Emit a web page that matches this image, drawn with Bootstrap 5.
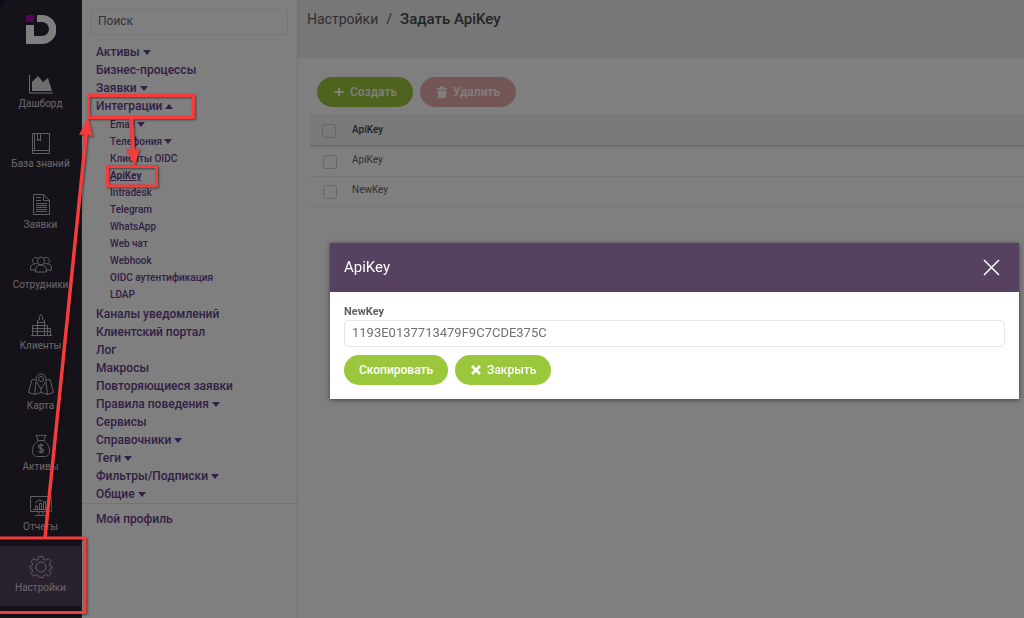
<!DOCTYPE html>
<html lang="ru">
<head>
<meta charset="utf-8">
<meta name="viewport" content="width=device-width, initial-scale=1">
<title>Настройки / Задать ApiKey</title>
<link href="https://cdn.jsdelivr.net/npm/bootstrap@5.3.0/dist/css/bootstrap.min.css" rel="stylesheet">
<style>
body{font-family:Roboto,"Open Sans",sans-serif;font-size:12px;line-height:18px;color:#606060;background:#fff}
.app{min-height:100vh}
.rail-wrap{background:#10182c}
.rail{width:82px;height:100%;padding:14px 0 12px;background:#2c2434;border-top-left-radius:10px;border-right:1px solid #3c3444}
.brand{height:48px}
.brand svg{width:30px;height:30px}
.brand path{fill:#fff}
.brand .dot{fill:#a808b4}
.rail-item{color:#d4d0d8;font-size:10px;line-height:14px;text-decoration:none;padding-top:9px}
.rail-item svg{width:26px;height:24px;fill:none;stroke:#c0bcc4;stroke-width:1;margin-bottom:2px}
.rail-item.active{background:#54425f}
.side{width:216px;padding-top:9px;border-right:1px solid #e4e4e4}
.side .form-control{height:26px;padding:0 7px 2px;font-size:12px;color:#666;background:transparent;border-color:#ececec;border-radius:3px}
.side .form-control::placeholder{color:#666;opacity:1}
.side a{color:#67408c;font-weight:500;text-decoration:none;display:block}
.search-box{padding:0 9px 8px 8px}
.tree{padding-left:14px}
.tree ul{padding:1px 0 2px 14px;font-size:10px;line-height:17px}
.tree .current{text-decoration:underline;font-weight:700}
.caret{display:inline-block;border:4px solid transparent;border-top:5px solid currentColor;border-bottom:0;vertical-align:1px}
.caret.up{border-top:0;border-bottom:5px solid currentColor}
.profile{border-top:1px solid #e8e8e8;padding:6px 14px}
.page-top{height:58px;background:#eee;padding:9px;font-size:14px;line-height:20px}
.page-top a{color:#606060;text-decoration:none}
.page-top strong{font-size:15px;font-weight:500;color:#484848}
.work{padding:19px 0 0 12px}
.toolbar,.actions{gap:7px}
.toolbar{padding-left:7px}
.pill{height:30px;border-radius:15px;padding:0 14px;border:0;color:#fff;font-size:12px;font-weight:500;line-height:28px;background:#9bc73c}
.pill svg{width:12px;height:12px;margin-right:2px;vertical-align:-2px}
.pill-wide{min-width:96px}
.actions .pill{padding:0 15px}
.pill-del{background:#ebacac;color:#fff}
.keys{font-size:10px;line-height:16px;margin:7px 0 0;--bs-table-color:#606060;--bs-table-bg:transparent}
.keys th,.keys td{padding:5px 0 7px;border-bottom:1px solid #ececec;font-weight:400;vertical-align:top}
.keys th{padding:8px 0 7px;background:#f4f4f4;border-bottom:2px solid #dcdcdc;font-weight:500;color:#444}
.keys th:first-child,.keys td:first-child{width:42px;padding-left:12px}
.keys .form-check-input{width:14px;height:14px;margin:2px 0 0;border-color:#ccc;border-radius:3px;background:transparent;display:block}
.keys td .form-check-input{margin:3px 0 0 1px}
.shade{position:fixed;inset:0;background:rgba(0,0,0,.5)}
.dialog{position:absolute;left:330px;right:5px;top:243px;background:#fff;box-shadow:0 1px 5px rgba(0,0,0,.5)}
.dialog-head{height:49px;background:#564260;color:#fff;padding:0 14px}
.dialog-head h1{font-size:15px;line-height:20px;font-weight:400;margin:0;padding-bottom:2px}
.dialog-head button{border:0;background:none;padding:0 5px 0 0;line-height:0}
.dialog-body{padding:12px 14px 14px}
.dialog-body label{font-size:11px;line-height:16px;font-weight:700;display:block}
.dialog-body .form-control{height:27px;padding:0 7px 2px;font-size:13px;line-height:20px;color:#707070;border-color:#e8e8e8;border-radius:4px;margin-bottom:8px}
.marks{position:absolute;left:0;top:0;pointer-events:none;filter:drop-shadow(1px 1px 1px rgba(0,0,0,.5))}
</style>
</head>
<body class="overflow-hidden">
<div class="app d-flex align-items-stretch">
  <div class="rail-wrap flex-shrink-0">
  <nav class="rail d-flex flex-column" aria-label="Разделы">
    <a class="brand d-flex justify-content-center align-items-start" href="#" aria-label="Главная"><svg viewBox="0 0 30 30"><path class="dot" d="M0 1h8v7H0z"/><path d="M11 1h5a14 14 0 0 1 0 29H0V11h8v11h8a7 7 0 0 0 0-14h-5z"/></svg></a>
    <a class="rail-item flex-fill d-flex flex-column align-items-center" href="#"><svg viewBox="0 0 26 24"><path d="M1.500 4v18H25" stroke="#ddd"/><path d="M4 20v-9l6-6 5 6 5-4 4 13z" fill="#ddd" stroke="none"/></svg>Дашборд</a>
    <a class="rail-item flex-fill d-flex flex-column align-items-center" href="#"><svg viewBox="0 0 26 24"><path d="M4.500 2.500h17v20h-17zM4.500 19.500h17M6.500 3v16M9.500 3v7l1.500-2 1.500 2V3"/></svg>База знаний</a>
    <a class="rail-item flex-fill d-flex flex-column align-items-center" href="#"><svg viewBox="0 0 26 24"><path d="M5.500 2.500h10l6 6v14h-16zM15.500 2.500v6h6M8 5.500h5M8 8.500h5M8 11.500h11M8 13.500h11M8 15.500h11M8 17.500h11M8 19.500h11"/></svg>Заявки</a>
    <a class="rail-item flex-fill d-flex flex-column align-items-center" href="#"><svg viewBox="0 0 26 24"><path d="M7.500 20c0-6 2-7 5.500-7s5.500 1 5.500 7zM8 18H2.500c0-5 1-6 4.500-6M18 18h5.500c0-5-1-6-4.500-6"/><ellipse cx="13" cy="9" rx="3.500" ry="4"/><path d="M9.500 11C6 13 4 10 4.500 8s3-4 5.500-1.500M16.500 11c3.500 2 5.500-1 5-3s-3-4-5.500-1.500"/></svg>Сотрудники</a>
    <a class="rail-item flex-fill d-flex flex-column align-items-center" href="#"><svg viewBox="0 0 26 24"><path d="M3 22.500h21M4.500 22V12.500h5V22M9.500 22V7.500l2-1v-3l1.500-2 1.500 2v3l2 1V22M16.500 12.500h3V22M19.500 15.500h3V22M10 9.500h6M10 12.500h6M10 15.500h6M10 18.500h6M5 15.500h4M5 18.500h4M17 15.500h2M17 18.500h5"/></svg>Клиенты</a>
    <a class="rail-item flex-fill d-flex flex-column align-items-center" href="#"><svg viewBox="0 0 26 24"><path d="M13 16c-3-5-5-7-5-10a5 5 0 0 1 10 0c0 3-2 5-5 10zM8 7 4 6.500.500 19.500l6 2 6.500-2 6.500 2 6-2L22 6.500 18 7M8 9 6.500 21.500M18 9l1.500 12.500M13 16v3.500"/><circle cx="13" cy="6" r="2.500"/></svg>Карта</a>
    <a class="rail-item flex-fill d-flex flex-column align-items-center" href="#"><svg viewBox="0 0 26 24"><path d="m10 6-2-5 3 1 2-1 2 1 3-1-2 5M9.500 6.500h7M10 7C6 10 4.500 13 4.500 17c0 4 2 5.500 5 5.500h7c3 0 5-1.500 5-5.500 0-4-1.500-7-5.500-10"/><path d="M15.500 12c-1-1.500-5-1.500-5 .8 0 2.400 5 1.200 5 3.700 0 2.300-4 2.300-5 .5M13 9.500v10" stroke-width="1.300"/></svg>Активы</a>
    <a class="rail-item flex-fill d-flex flex-column align-items-center" href="#"><svg viewBox="0 0 26 24"><path d="M2.500 2.500h21v15h-21zM11 17.500v3M15 17.500v3M7 21.500h12M5 15.500h16"/><path d="M7.500 15v-3h2v3M11.500 15V9.500h2V15M15.500 15V7.500h2V15M19.500 15v-4M7 9l4-3 3 1" stroke="#a8c4dc"/></svg>Отчеты</a>
    <a class="rail-item active flex-fill d-flex flex-column align-items-center" href="#"><svg viewBox="0 0 26 24"><circle cx="13" cy="12" r="5"/><path d="M11 1.500h4l.7 3 2 .8 2.600-1.600L23 6.400 21.400 9l.8 2 1.800.4v2.200l-1.800.4-.8 2 1.600 2.600-2.700 2.500-2.600-1.600-2 .8-.7 2.200h-4l-.7-2.200-2-.8-2.600 1.600L3 18.600 4.600 16l-.8-2-1.800-.4v-2.200l1.800-.4.8-2L3 6.400l2.700-2.700 2.600 1.600 2-.8z"/></svg>Настройки</a>
  </nav>
  </div>

  <aside class="side flex-shrink-0">
    <div class="search-box"><input class="form-control" type="text" placeholder="Поиск" aria-label="Поиск"></div>
    <ul class="tree list-unstyled mb-0">
      <li><a href="#">Активы <i class="caret"></i></a></li>
      <li><a href="#">Бизнес-процессы</a></li>
      <li><a href="#">Заявки <i class="caret"></i></a></li>
      <li><a href="#">Интеграции <i class="caret up"></i></a>
        <ul class="list-unstyled">
          <li><a href="#">Email <i class="caret"></i></a></li>
          <li><a href="#">Телефония <i class="caret"></i></a></li>
          <li><a href="#">Клиенты OIDC</a></li>
          <li><a href="#" class="current">ApiKey</a></li>
          <li><a href="#">Intradesk</a></li>
          <li><a href="#">Telegram</a></li>
          <li><a href="#">WhatsApp</a></li>
          <li><a href="#">Web чат</a></li>
          <li><a href="#">Webhook</a></li>
          <li><a href="#">OIDC аутентификация</a></li>
          <li><a href="#">LDAP</a></li>
        </ul>
      </li>
      <li><a href="#">Каналы уведомлений</a></li>
      <li><a href="#">Клиентский портал</a></li>
      <li><a href="#">Лог</a></li>
      <li><a href="#">Макросы</a></li>
      <li><a href="#">Повторяющиеся заявки</a></li>
      <li><a href="#">Правила поведения <i class="caret"></i></a></li>
      <li><a href="#">Сервисы</a></li>
      <li><a href="#">Справочники <i class="caret"></i></a></li>
      <li><a href="#">Теги <i class="caret"></i></a></li>
      <li><a href="#">Фильтры/Подписки <i class="caret"></i></a></li>
      <li><a href="#">Общие <i class="caret"></i></a></li>
    </ul>
    <div class="profile"><a href="#">Мой профиль</a></div>
  </aside>

  <main class="flex-grow-1">
    <header class="page-top d-flex align-items-start gap-2"><a href="#">Настройки</a><span>/</span><strong>Задать ApiKey</strong></header>
    <div class="work">
      <div class="toolbar d-flex">
        <button class="btn pill pill-wide" type="button"><svg viewBox="0 0 12 12" stroke="currentColor" stroke-width="2"><path d="M6 1.500v9M1.500 6h9"/></svg> Создать</button>
        <button class="btn pill pill-wide pill-del" type="button"><svg viewBox="0 0 12 12" fill="currentColor"><path d="M1 2h3V.500h4V2h3v1.500H1zM2 4.500h8V12H2z"/></svg> Удалить</button>
      </div>
      <table class="table keys">
        <thead><tr><th><input class="form-check-input" type="checkbox" aria-label="Выбрать все"></th><th>ApiKey</th></tr></thead>
        <tbody>
          <tr><td><input class="form-check-input" type="checkbox" aria-label="ApiKey"></td><td>ApiKey</td></tr>
          <tr><td><input class="form-check-input" type="checkbox" aria-label="NewKey"></td><td>NewKey</td></tr>
        </tbody>
      </table>
    </div>
  </main>
</div>

<div class="shade"></div>

<section class="dialog" role="dialog" aria-labelledby="dlg-title">
  <div class="dialog-head d-flex align-items-center justify-content-between">
    <h1 id="dlg-title">ApiKey</h1>
    <button type="button" aria-label="Закрыть окно"><svg width="17" height="17" viewBox="0 0 17 17" stroke="#fff" stroke-width="1.500"><path d="m1 1 15 15M16 1 1 16"/></svg></button>
  </div>
  <div class="dialog-body">
    <label for="key">NewKey</label>
    <input class="form-control" id="key" type="text" value="1193E0137713479F9C7CDE375C">
    <div class="actions d-flex">
      <button class="btn pill" type="button">Скопировать</button>
      <button class="btn pill pill-wide" type="button"><svg viewBox="0 0 12 12" stroke="currentColor" stroke-width="2.500"><path d="m2 2 8 8M10 2l-8 8"/></svg> Закрыть</button>
    </div>
  </div>
</section>

<svg class="marks" width="210" height="618" viewBox="0 0 210 618" fill="none" stroke="#f43c3c" stroke-width="3" stroke-linejoin="round" aria-hidden="true">
  <path d="M-4 538h89v74.500H-4z"/>
  <path d="M88.500 95.500h105v22h-105z"/>
  <path d="M107.500 166.500h49v19.500h-49z"/>
  <path d="M45 538 86.500 130" stroke-width="3.500"/>
  <path d="m88 117 5 20-6.500-3-7.500 1z" fill="#f43c3c" stroke="none"/>
  <path d="M131.500 118 133 152" stroke-width="4"/>
  <path d="m134.500 167-8.500-19 7 3 7-3z" fill="#f43c3c" stroke="none"/>
</svg>
<script src="https://cdn.jsdelivr.net/npm/bootstrap@5.3.0/dist/js/bootstrap.bundle.min.js"></script>
</body>
</html>
